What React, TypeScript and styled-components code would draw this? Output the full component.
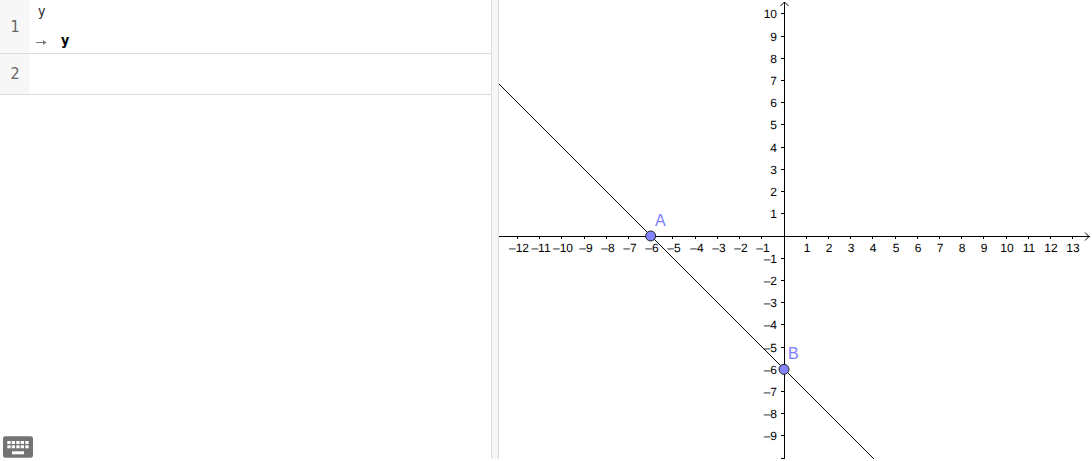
import React from "react";
import styled, { createGlobalStyle } from "styled-components";

const GlobalStyle = createGlobalStyle`
  * { box-sizing: border-box; }
  body { margin: 0; background: #fff; }
`;

const Workspace = styled.main`
  display: grid;
  grid-template-columns: minmax(0, 491fr) 8px minmax(0, 591fr);
  height: 100vh;
  padding: 0 2px 2px 0;
  overflow: hidden;
`;

const CasPanel = styled.section`
  display: flex;
  flex-direction: column;
  justify-content: space-between;
  align-items: flex-start;
  font-family: "DejaVu Sans Condensed", "DejaVu Sans", sans-serif;
`;

const CellList = styled.ol`
  list-style: none;
  margin: 0;
  padding: 0;
  width: 100%;
`;

const Cell = styled.li`
  display: flex;
  min-height: 41px;
  border-bottom: 1px solid #dcdcdc;
`;

const CellNumber = styled.label`
  display: flex;
  flex: none;
  align-items: center;
  justify-content: center;
  width: 30px;
  background: #f7f7f7;
  color: #666;
  font-size: 16px;
  line-height: 20px;
`;

const CellBody = styled.div`
  flex: 1;
  min-width: 0;
  padding-left: 8px;
`;

const CellInput = styled.input`
  display: block;
  width: 100%;
  height: 22px;
  padding: 0;
  border: 0;
  outline: 0;
  background: transparent;
  color: #1c1c1f;
  font-family: inherit;
  font-size: 14px;
`;

const CellOutput = styled.output`
  display: flex;
  align-items: center;
  gap: 12px;
  height: 31px;
  padding-top: 4px;
  color: #000;
  font-size: 14px;
  font-weight: bold;
  line-height: 24px;
`;

const Arrow = styled.svg`
  flex: none;
  margin: 4px 0 0 -2px;
`;

const KeyboardButton = styled.button`
  display: block;
  width: 30px;
  height: 22px;
  margin: 0 3px 1px;
  padding: 0;
  border: 0;
  background: transparent;
`;

const Splitter = styled.div`
  border: solid #dcdcdc;
  border-width: 0 1px;
  background: #f7f7f7;
`;

const Graph = styled.svg`
  display: block;
  width: 100%;
  height: 100%;
  overflow: hidden;
  font-family: "Liberation Sans", Arial, sans-serif;
`;

const AxisText = styled.text`
  fill: #000;
  font-size: 12px;
  text-rendering: geometricPrecision;
`;

const PointText = styled.text`
  fill: #7d7dff;
  font-size: 16px;
`;

const UNIT = 22.22;
const ORIGIN_X = 285;
const ORIGIN_Y = 236;
const REACH = 60;

const toX = (value: number) => Math.floor(ORIGIN_X + value * UNIT);
const toY = (value: number) => Math.floor(ORIGIN_Y - value * UNIT);
const format = (value: number) => (value < 0 ? `–${-value}` : `${value}`);
const range = (from: number, to: number) =>
  Array.from({ length: to - from + 1 }, (_, i) => from + i).filter((v) => v !== 0);

const points = [
  { name: "A", x: -6, y: 0 },
  { name: "B", x: 0, y: -6 },
];

function CasCell({ number, value, result }: { number: number; value: string; result?: string }) {
  const id = `cell-${number}`;
  return (
    <Cell>
      <CellNumber htmlFor={id}>{number}</CellNumber>
      <CellBody>
        <CellInput id={id} defaultValue={value} autoComplete="off" spellCheck={false} />
        {result && (
          <CellOutput htmlFor={id}>
            <Arrow width="13" height="8" viewBox="0 0 13 8" fill="none" stroke="#777" aria-hidden="true">
              <path d="M0 4.5H9" />
              <path d="M7 2L10.5 4.5L7 7Z" fill="#777" stroke="none" />
            </Arrow>
            {result}
          </CellOutput>
        )}
      </CellBody>
    </Cell>
  );
}

function KeyboardIcon() {
  return (
    <svg width="30" height="22" viewBox="0 0 30 22" aria-hidden="true">
      <rect y="0.3" width="30" height="21.4" rx="2.2" fill="#737373" />
      <g fill="#fff">
        {[5, 9.3].map((y) =>
          [4.3, 8.7, 13.3, 17.7, 22.3].map((x) => (
            <rect key={`${x}-${y}`} x={x} y={y} width="3.3" height="3" />
          ))
        )}
        <rect x="9" y="15.3" width="12" height="3" />
      </g>
    </svg>
  );
}

function GraphView() {
  return (
    <Graph role="img" aria-label="Line through A and B">
      <g stroke="#000" fill="none">
        <path d={`M0 ${ORIGIN_Y + 0.5}H4000`} />
        <path d={`M${ORIGIN_X + 0.5} 2V4000`} />
        <path d={`M${ORIGIN_X - 3.5} 6L${ORIGIN_X + 0.5} 2L${ORIGIN_X + 4.5} 6`} />
        {range(-12, REACH).map((v) => (
          <path key={`x${v}`} d={`M${toX(v) + 0.5} ${ORIGIN_Y}v3`} />
        ))}
        {range(-REACH, 10).map((v) => (
          <path key={`y${v}`} d={`M${ORIGIN_X - 3} ${toY(v) + 0.5}h3`} />
        ))}
      </g>
      <svg x="100%" overflow="visible">
        <path
          d={`M-5 ${ORIGIN_Y - 3.5}L-1 ${ORIGIN_Y + 0.5}L-5 ${ORIGIN_Y + 4.5}`}
          fill="none"
          stroke="#000"
        />
      </svg>
      {range(-12, 13).map((v) => (
        <AxisText key={v} x={toX(v) + (v < 0 ? 2 : 1)} y={ORIGIN_Y + 16} textAnchor="middle">
          {format(v)}
        </AxisText>
      ))}
      {range(-9, 10).map((v) => (
        <AxisText key={v} x={ORIGIN_X - 7} y={toY(v) + 5} textAnchor="end">
          {format(v)}
        </AxisText>
      ))}
      <line x1="-48" y1="36" x2="952" y2="1036" stroke="#000" strokeWidth="1" />
      {points.map((p) => (
        <g key={p.name}>
          <circle cx={ORIGIN_X + p.x * UNIT} cy={ORIGIN_Y - p.y * UNIT} r="5" fill="#8484ff" stroke="#222" />
          <PointText x={Math.round(ORIGIN_X + p.x * UNIT) + 4} y={toY(p.y) - 10}>
            {p.name}
          </PointText>
        </g>
      ))}
    </Graph>
  );
}

export default function App() {
  return (
    <>
      <GlobalStyle />
      <Workspace>
        <CasPanel>
          <CellList>
            <CasCell number={1} value="y" result="y" />
            <CasCell number={2} value="" />
          </CellList>
          <KeyboardButton type="button" aria-label="Show keyboard">
            <KeyboardIcon />
          </KeyboardButton>
        </CasPanel>
        <Splitter role="separator" aria-orientation="vertical" />
        <GraphView />
      </Workspace>
    </>
  );
}
